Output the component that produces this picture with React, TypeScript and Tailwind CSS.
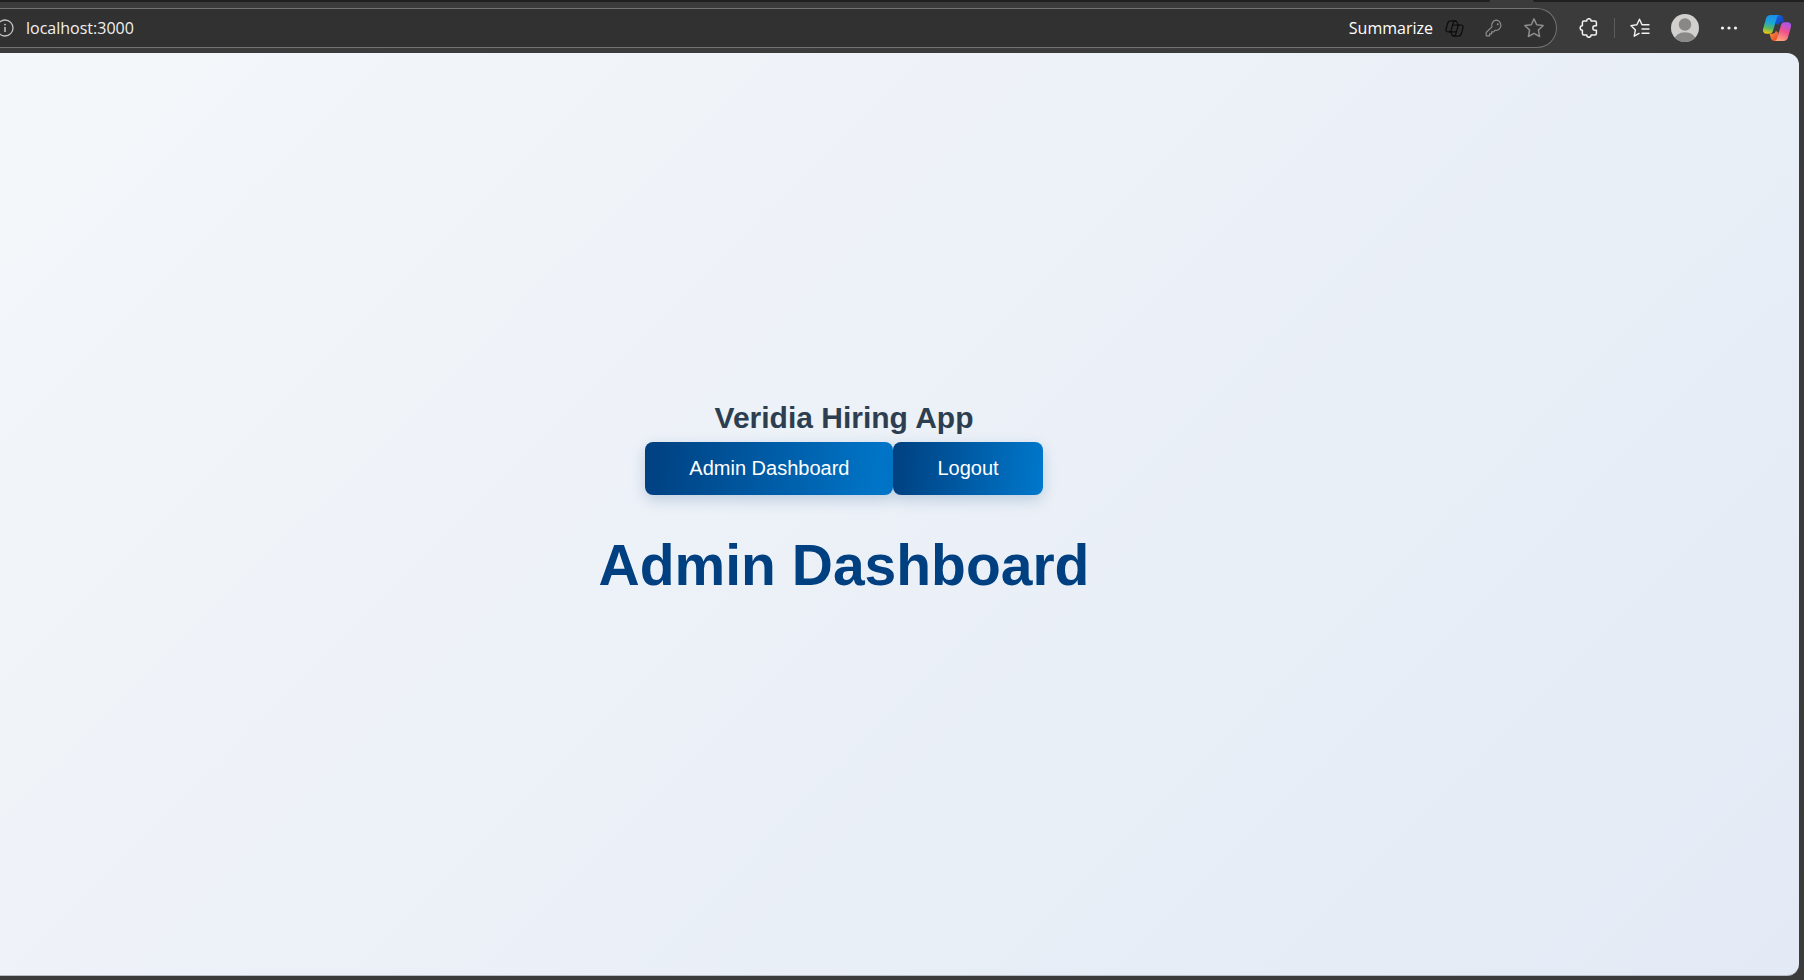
import React from "react";

function InfoIcon() {
  return (
    <svg width="18" height="18" viewBox="0 0 18 18" fill="none" stroke="#c4c4c4" strokeWidth="1.3" aria-hidden="true">
      <circle cx="9" cy="9" r="8" />
      <path d="M9 8v5" strokeWidth="1.5" />
      <circle cx="9" cy="5.6" r="0.9" fill="#c4c4c4" stroke="none" />
    </svg>
  );
}

function CopilotOutline() {
  return (
    <svg width="19" height="17" viewBox="0 0 20 18" fill="none" stroke="#0c0c0c" strokeWidth="1.3" strokeLinejoin="round" strokeLinecap="round" aria-hidden="true">
      <path d="M7 12.500H3.200C1.300 12.500.6 11.300 1.100 9.500L2.700 3.700C3.200 1.700 4.200.9 6 .9h4.700c1.300 0 1.900.8 2.300 2.200l.7 2.200" />
      <path d="M13 5.300h3.800c1.900 0 2.600 1.200 2.100 3l-1.600 5.800c-.5 2-1.500 2.900-3.300 2.900H9.300c-1.300 0-1.900-.8-2.300-2.200l-.6-2.300" />
      <path d="M10.700.9c-1.100.2-1.700.9-2 2L6.500 10.800c-.3 1-.9 1.600-2 1.700M9.300 17c1.100-.2 1.700-.9 2-2l2.200-7.800c.3-1.100.9-1.700 2-1.900" />
      <path d="M8 5.300h5M7 12.500h5" />
    </svg>
  );
}

function KeyIcon() {
  return (
    <svg width="18" height="18" viewBox="0 0 18 18" fill="none" stroke="#8c8c8c" strokeWidth="1.2" strokeLinejoin="round" aria-hidden="true">
      <path d="M11.600 1.200a5 5 0 0 0-4.700 6.600L1.200 13.500v3.300h3.400v-2h2v-2h2l1.300-1.500a5 5 0 1 0 1.700-10.100Z" />
      <circle cx="12.800" cy="5.200" r="1" fill="#8c8c8c" stroke="none" />
    </svg>
  );
}

function StarIcon() {
  return (
    <svg width="20" height="20" viewBox="0 0 20 20" fill="none" stroke="#8c8c8c" strokeWidth="1.500" strokeLinejoin="round" aria-hidden="true">
      <path d="M10 .9l2.700 5.900 6.400.8-4.700 4.400 1.200 6.500L10 15.300l-5.600 3.200 1.200-6.500L.9 7.600l6.400-.8Z" />
    </svg>
  );
}

function PuzzleIcon() {
  return (
    <svg width="20" height="20" viewBox="0 0 20 20" fill="none" stroke="#f2f2f2" strokeWidth="1.500" strokeLinejoin="round" aria-hidden="true">
      <path d="M7.700 2.900a2.200 2.200 0 0 1 4.400 0h3.800c.9 0 1.500.6 1.500 1.500v3.300h-1.300a2.300 2.300 0 0 0 0 4.600h1.300v3.300c0 .9-.6 1.500-1.500 1.500h-3.800a2.200 2.200 0 0 1-4.400 0H4.900c-.9 0-1.500-.6-1.500-1.500v-3.400a2.200 2.200 0 0 1 0-4.400V4.400c0-.9.6-1.500 1.500-1.500Z" />
    </svg>
  );
}

function FavoritesIcon() {
  return (
    <svg width="20" height="20" viewBox="0 0 20 20" fill="none" stroke="#f2f2f2" strokeWidth="1.400" strokeLinejoin="round" strokeLinecap="round" aria-hidden="true">
      <path d="M19 6.800h-7L9.500 1.200 6.900 6.800.9 7.600l4.500 4.300-1.200 6.300 4.900-2.800M12 11h7M12 15.200h7" />
    </svg>
  );
}

function AvatarIcon() {
  return (
    <svg width="28" height="28" viewBox="0 0 28 28" aria-hidden="true">
      <defs>
        <clipPath id="avatar-clip">
          <circle cx="14" cy="14" r="14" />
        </clipPath>
      </defs>
      <g clipPath="url(#avatar-clip)">
        <rect width="28" height="28" fill="#d2d0ce" />
        <circle cx="14" cy="10.500" r="6.200" fill="#8a8886" />
        <ellipse cx="14" cy="26.500" rx="11" ry="8.300" fill="#8a8886" />
      </g>
    </svg>
  );
}

function CopilotLogo() {
  return (
    <svg width="28" height="26" viewBox="0 0 28 26" aria-hidden="true">
      <defs>
        <linearGradient id="cp-left" x1="0.500" y1="0" x2="0.300" y2="1">
          <stop offset="0" stopColor="#1b8fe8" />
          <stop offset="0.400" stopColor="#1aa6d8" />
          <stop offset="0.700" stopColor="#57b865" />
          <stop offset="1" stopColor="#f2c80f" />
        </linearGradient>
        <linearGradient id="cp-right" x1="0.700" y1="0" x2="0.300" y2="1">
          <stop offset="0" stopColor="#a855f0" />
          <stop offset="0.450" stopColor="#f0508c" />
          <stop offset="1" stopColor="#ffa878" />
        </linearGradient>
        <linearGradient id="cp-top" x1="0" y1="0" x2="1" y2="1">
          <stop offset="0" stopColor="#1567dc" />
          <stop offset="1" stopColor="#1838b8" />
        </linearGradient>
        <linearGradient id="cp-bottom" x1="0" y1="0" x2="1" y2="1">
          <stop offset="0" stopColor="#f79a3a" />
          <stop offset="1" stopColor="#e8402c" />
        </linearGradient>
      </defs>
      <path d="M13 0h3c2.600 0 3.600 1 4.200 3l1.300 4.300h-2.600c-2.200 0-3.200 1.200-3.800 3L12.500 8Z" fill="url(#cp-top)" />
      <path d="M15 26h-3c-2.600 0-3.600-1-4.200-3l-1.300-4.300h2.600c2.200 0 3.200-1.200 3.800-3l2.600 2.300Z" fill="url(#cp-bottom)" />
      <path d="M7.500 0H16.500c-1.600.4-2.200 1.500-2.700 3L10.100 15.400c-.7 2.200-1.600 3.300-4 3.300H3.500C.6 18.700-.5 16.700.2 13.600L3 3.800C3.800 1.200 5.200 0 7.500 0Z" fill="url(#cp-left)" />
      <path d="M20.500 26H11.500c1.600-.4 2.200-1.500 2.700-3l3.700-12.400c.7-2.200 1.600-3.300 4-3.300h2.600c2.900 0 4 2 3.300 5.100L25 22.200c-.8 2.600-2.200 3.800-4.500 3.800Z" fill="url(#cp-right)" />
    </svg>
  );
}

function AddressBar() {
  return (
    <div className="flex h-10 min-w-0 flex-1 items-center rounded-r-full border border-l-0 border-[#727272] bg-[#313131] pr-3">
      <button type="button" aria-label="Site information" className="-ml-1 shrink-0">
        <InfoIcon />
      </button>
      <input
        type="text"
        aria-label="Address"
        defaultValue="localhost:3000"
        className="ml-3 min-w-0 flex-1 bg-transparent text-base leading-6 text-[#f0f0f0] outline-none"
      />
      <button type="button" className="flex items-center gap-3 text-base leading-6 text-white">
        Summarize
        <CopilotOutline />
      </button>
      <button type="button" aria-label="Passwords" className="ml-[21px]">
        <KeyIcon />
      </button>
      <button type="button" aria-label="Add to favorites" className="ml-[21px]">
        <StarIcon />
      </button>
    </div>
  );
}

function Toolbar() {
  return (
    <header className="flex h-[53px] shrink-0 flex-col bg-[#3b3b3b] font-['Open_Sans','Noto_Sans',sans-serif]">
      <div className="flex h-[2px] shrink-0 bg-[#3b3b3b]">
        <div className="flex-1 rounded-br bg-[#1f1f1f]" />
        <div className="w-[43px]" />
        <div className="w-[271px] rounded-bl bg-[#1f1f1f]" />
      </div>
      <div className="flex flex-1 items-center pt-1 pr-[13px] pb-[3px]">
        <AddressBar />
        <button type="button" aria-label="Extensions" className="ml-[22px]">
          <PuzzleIcon />
        </button>
        <div className="ml-[15px] h-5 w-px bg-[#5c5c5c]" />
        <button type="button" aria-label="Favorites" className="ml-[15px]">
          <FavoritesIcon />
        </button>
        <button type="button" aria-label="Profile" className="ml-[21px]">
          <AvatarIcon />
        </button>
        <button type="button" aria-label="Settings and more" className="ml-[21px]">
          <svg width="18" height="18" viewBox="0 0 18 18" fill="#f2f2f2" aria-hidden="true">
            <circle cx="2.500" cy="9" r="1.600" />
            <circle cx="9" cy="9" r="1.600" />
            <circle cx="15.500" cy="9" r="1.600" />
          </svg>
        </button>
        <button type="button" aria-label="Copilot" className="ml-[25px]">
          <CopilotLogo />
        </button>
      </div>
    </header>
  );
}

const navButton =
  "rounded-lg bg-linear-95 from-[#004080] to-[#0078cc] px-11 py-[15px] text-xl leading-[23px] text-white shadow-[0_5px_15px_rgba(0,64,128,0.2)]";

export default function App() {
  return (
    <div className="flex min-h-screen flex-col bg-[#3b3b3b]">
      <Toolbar />
      <main className="mr-[5px] mb-1 flex flex-1 flex-col items-center justify-center rounded-r-xl border-b border-[#b9bcc4] bg-[linear-gradient(135deg,#f4f7fa_0%,#e3eaf5_100%)] pr-[111px] pb-[26px] font-['Liberation_Sans',Arial,sans-serif]">
        <h2 className="text-3xl leading-[45px] font-bold text-[#2c3e50]">Veridia Hiring App</h2>
        <nav className="mt-0.5 flex">
          <button type="button" className={navButton}>Admin Dashboard</button>
          <button type="button" className={navButton}>Logout</button>
        </nav>
        <h1 className="mt-7 text-[57px] leading-[84px] font-bold text-[#004080]">Admin Dashboard</h1>
      </main>
    </div>
  );
}
